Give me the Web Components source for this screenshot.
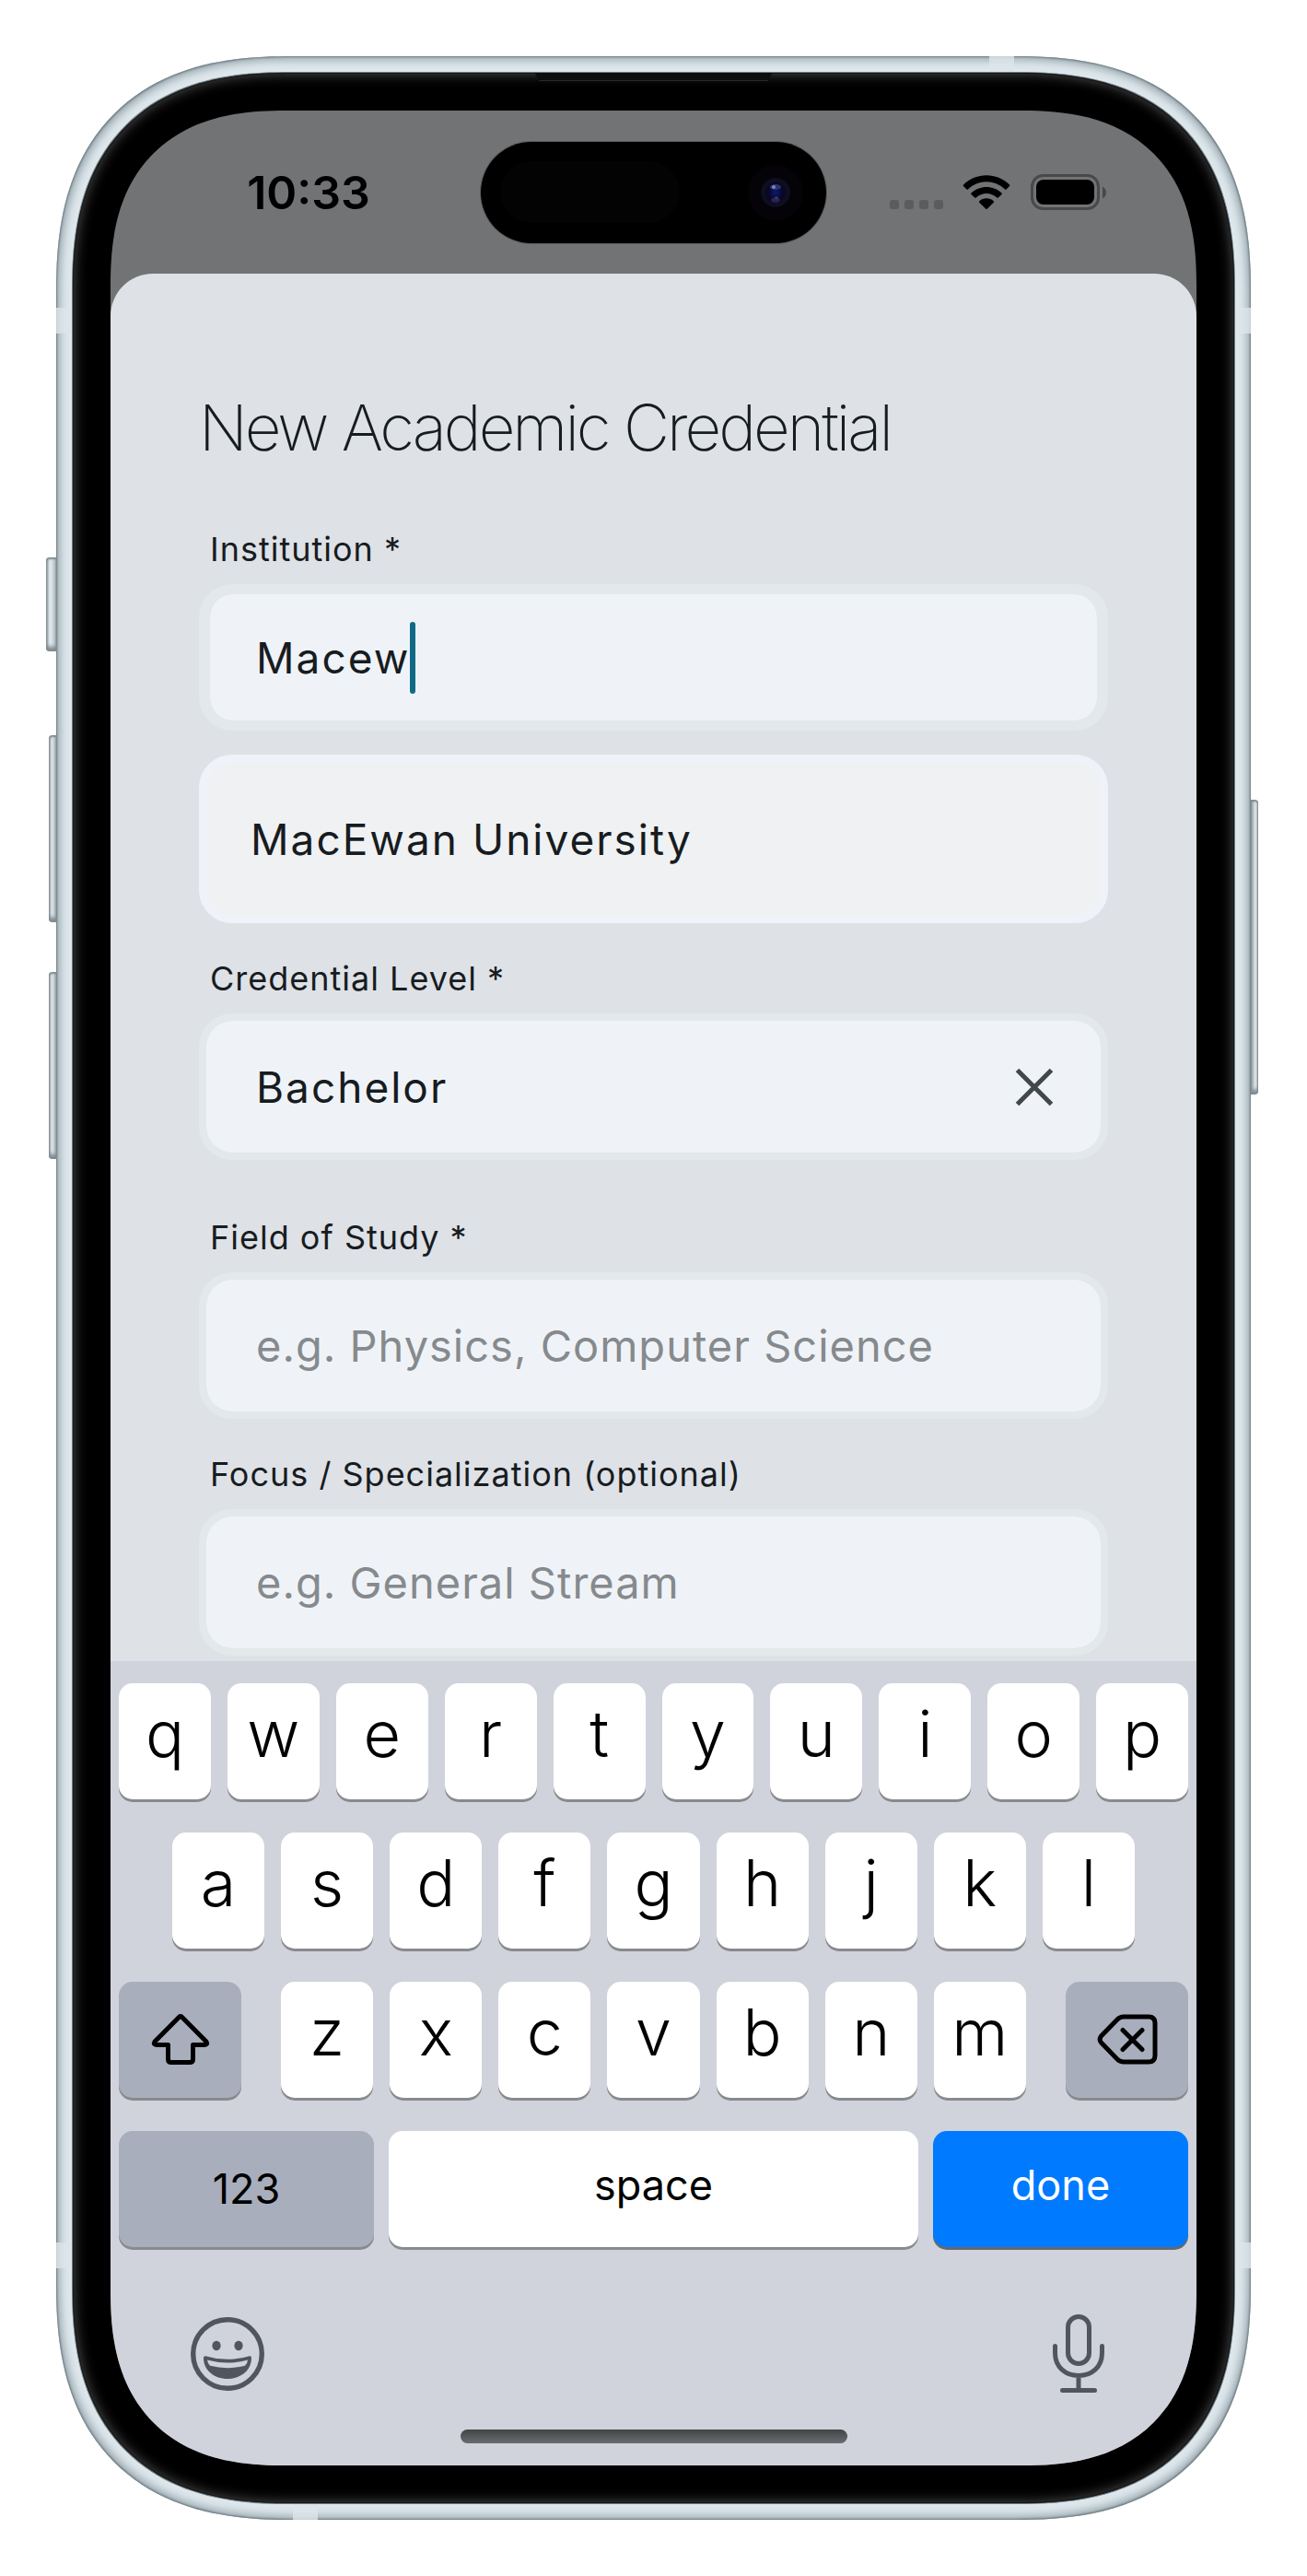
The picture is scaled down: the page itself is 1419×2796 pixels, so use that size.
<!DOCTYPE html>
<html lang="en">
<head>
<meta charset="utf-8">
<meta name="viewport" content="width=device-width, initial-scale=1">
<title>New Academic Credential</title>
<style>
  body { margin: 0; background: #fff; font-family: Inter, "Liberation Sans", sans-serif; color: #171c1f; }
</style>
</head>
<body>
<phone-frame>
  <status-bar></status-bar>
  <form-sheet heading="New Academic Credential">
    <text-field label="Institution *" value="Macew" focused></text-field>
    <suggestion-card>MacEwan University</suggestion-card>
    <text-field label="Credential Level *" value="Bachelor" clearable></text-field>
    <text-field label="Field of Study *" placeholder="e.g. Physics, Computer Science"></text-field>
    <text-field label="Focus / Specialization (optional)" placeholder="e.g. General Stream"></text-field>
  </form-sheet>
  <key-board></key-board>
</phone-frame>

<script>
function define(name, render) {
  customElements.define(name, class extends HTMLElement {
    connectedCallback() {
      if (this.shadowRoot) return;
      this.attachShadow({ mode: 'open' }).innerHTML = render(this);
    }
  });
}

define('phone-frame', () => `
<style>
  :host { display: block; position: relative; margin: 61px; }
  .rim, .bezel, .screen { box-sizing: border-box; corner-shape: superellipse(1.3); }
  .rim { position: relative; padding: 18px; border-radius: 222px; background: #dde7ec;
         box-shadow: inset 0 0 2px 1px #6f7c82, inset 0 0 10px 4px #98a6ad; }
  .bezel { position: relative; padding: 41px; border-radius: 204px; background: #000;
           box-shadow: inset 0 0 0 1px #16191a, inset 0 0 14px 1px #505050, 0 0 0 1px #6f7b81; }
  .screen { display: flex; flex-direction: column; overflow: hidden; border-radius: 163px; background: #727375; }
  @supports (corner-shape: superellipse(1.3)) {
    .rim { border-radius: 256px; }
    .bezel { border-radius: 236px; }
    .screen { border-radius: 190px; }
  }
  .side { position: absolute; width: 11px; border-radius: 4px 0 0 4px;
          background: linear-gradient(90deg, #8b969b, #e4ecf0 35%, #bcc8ce);
          box-shadow: inset 0 2px 2px #7f8a90, inset 0 -5px 4px #7f8a90; }
  .slim { width: 8px; }
  .right { border-radius: 0 4px 4px 0; background: linear-gradient(90deg, #8f9ba1, #c9d4da 40%, #f0f4f6 75%, #7b868c); }
  .band { position: absolute; background: #dce5e8; opacity: .8; }
  .ear { position: absolute; top: 0; left: 50%; width: 258px; margin-left: -129px; height: 9px; background: #0d0d0d;
         border-bottom: 1px solid #2a2a2a; box-sizing: border-box; clip-path: polygon(0 0, 100% 0, 98% 100%, 2% 100%); }
</style>
<div class="side" style="left:-11px;top:544px;height:102px"></div>
<div class="side slim" style="left:-8px;top:737px;height:203px"></div>
<div class="side slim" style="left:-8px;top:994px;height:203px"></div>
<div class="side slim right" style="right:-8px;top:807px;height:320px"></div>
<div class="rim">
  <div class="band" style="left:0;top:273px;width:17px;height:28px"></div>
  <div class="band" style="right:0;top:273px;width:17px;height:28px"></div>
  <div class="band" style="left:0;bottom:273px;width:17px;height:28px"></div>
  <div class="band" style="right:0;bottom:273px;width:17px;height:28px"></div>
  <div class="band" style="right:257px;top:0;width:27px;height:17px"></div>
  <div class="band" style="left:257px;bottom:0;width:27px;height:17px"></div>
  <div class="bezel"><div class="ear"></div><div class="screen"><slot></slot></div></div>
</div>`);

define('status-bar', () => `
<style>
  :host { display: grid; grid-template-columns: 1fr 375px 1fr; align-items: center; height: 177px; color: #000; }
  time { text-align: center; padding-left: 28px; font-size: 50px; font-weight: 600; line-height: 60px; }
  .island { height: 110px; border-radius: 55px; background: #000; box-shadow: 0 0 0 1px #5c5d5f; box-sizing: border-box;
            display: flex; align-items: center; justify-content: space-between; padding: 0 25px 0 21px; }
  .sensor { width: 195px; height: 67px; border-radius: 34px; background: #030303; }
  .icons { display: flex; justify-content: center; align-items: center; padding-right: 29px; }
  svg { display: block; }
</style>
<time>10:33</time>
<div class="island"><div class="sensor"></div>
  <svg width="60" height="60" viewBox="0 0 60 60"><defs>
    <radialGradient id="lens"><stop offset="0" stop-color="#131b66"/><stop offset=".45" stop-color="#090b42"/><stop offset=".75" stop-color="#07071f"/><stop offset="1" stop-color="#0c0d1e"/></radialGradient></defs>
    <circle cx="30" cy="30" r="30" fill="#050307"/><circle cx="30" cy="30" r="16" fill="#0d0e20"/>
    <circle cx="30" cy="30" r="12" fill="url(#lens)"/><ellipse cx="30" cy="24" rx="6" ry="3" fill="#2b3378"/>
    <circle cx="28" cy="24" r="2" fill="#7c83bd"/><ellipse cx="30" cy="38" rx="5" ry="3" fill="#35195a"/><circle cx="31" cy="36" r="2" fill="#12494f"/></svg>
</div>
<div class="icons">
  <svg width="236" height="40" viewBox="0 0 236 40" role="img" aria-label="Wi-Fi connected, battery full">
    <g fill="#5b5c5e"><rect x="0" y="28" width="10" height="10" rx="3"/><rect x="16" y="28" width="10" height="10" rx="3"/><rect x="32" y="28" width="10" height="10" rx="3"/><rect x="48" y="28" width="10" height="10" rx="3"/></g>
    <g fill="#000"><path d="M80 11.5C94 -2.2 116 -2.2 130 11.5Q130.700 12.300 130 13L126.500 16.400Q125.800 17 125 16.400C113.500 5.600 96.500 5.600 85 16.400Q84.200 17 83.500 16.400L80 13Q79.300 12.300 80 11.500Z"/>
    <path d="M88.500 20.500C97.500 11.700 112.500 11.700 121.500 20.500Q122.200 21.200 121.500 22L117.800 25.500Q117 26 116.300 25.500C109.800 19.500 100.200 19.500 93.700 25.500Q93 26 92.200 25.500L88.500 22Q87.800 21.200 88.500 20.500Z"/>
    <path d="M97.300 29.200C101.600 25.400 108.400 25.400 112.700 29.200Q113.500 30 112.800 30.800L106 37.500Q105 38.300 104 37.500L97.200 30.800Q96.500 30 97.300 29.200Z"/></g>
    <rect x="154.500" y="1.500" width="72" height="36" rx="12" fill="none" stroke="#48494b" stroke-width="3"/>
    <rect x="159" y="6" width="63" height="27" rx="8" fill="#000"/><path d="M231 13.500Q235 16 235 20T231 26.500Z" fill="#48494b"/>
  </svg>
</div>`);

define('form-sheet', el => `
<style>
  :host { display: flex; flex-direction: column; gap: 38px; padding: 125px 96px 6px; border-radius: 46px 46px 0 0; background: #dee1e6; }
  h1 { margin: 0 0 30px; font-size: 69px; line-height: 84px; font-weight: 200; letter-spacing: -3px; white-space: nowrap; }
</style>
<h1>${el.getAttribute('heading')}</h1>
<slot></slot>`);

define('text-field', el => {
  const a = n => el.getAttribute(n) || '';
  const on = el.hasAttribute('focused'), clear = el.hasAttribute('clearable');
  return `
<style>
  :host { display: flex; flex-direction: column; gap: 16px; }
  :host([clearable]) { padding-bottom: 24px; }
  label { padding-left: 12px; font-size: 36px; line-height: 44px; letter-spacing: 1px; }
  .box { display: flex; align-items: center; box-sizing: border-box; height: 159px; padding: 0 48px 0 54px; border: 8px solid #e3e8eb;
         border-radius: 36px; background: #eff3f8; background-clip: padding-box; }
  :host([focused]) .box { border-width: 11px 12px; padding-left: 50px; }
  input { flex: 1; min-width: 0; padding: 0; border: 0; outline: 0; background: none; font: inherit; font-size: 46px; line-height: 60px; height: 60px;
          letter-spacing: 2px; color: #171c1f; }
  :host([focused]) input { flex: none; field-sizing: content; caret-color: transparent; }
  :host([placeholder]) input { font-size: 47px; letter-spacing: 1px; }
  input::placeholder { color: #868a8d; opacity: 1; }
  .caret { width: 6px; height: 78px; border-radius: 3px; background: #106a84; }
  button { width: 48px; height: 48px; padding: 0; border: 0; background: none; color: #41484c; }
  svg { display: block; }
</style>
<label for="in">${a('label')}</label>
<div class="box"><input id="in" type="text" value="${a('value')}" placeholder="${a('placeholder')}">${on ? '<span class="caret"></span>' : ''}${clear ? `
  <button type="button" aria-label="Clear"><svg width="48" height="48" viewBox="0 0 48 48" fill="none" stroke="currentColor" stroke-width="5"><path d="M5.500 5.500L42.500 42.500M42.500 5.500L5.500 42.500"/></svg></button>` : ''}</div>`;
});

define('suggestion-card', () => `
<style>
  :host { display: block; margin-top: -12px; }
  button { display: block; width: 100%; height: 183px; box-sizing: border-box; padding: 0 48px; border: 8px solid #eff3f9; border-radius: 36px;
           background: #f0f1f3; color: #171c1f; font: inherit; font-size: 46px; line-height: 60px; letter-spacing: 2px; text-align: left; }
</style>
<button type="button"><slot></slot></button>`);

define('key-cap', () => `
<style>
  :host { display: flex; flex: 1 1 0; min-width: 0; height: 126px; }
  button { flex: 1; min-width: 0; display: flex; align-items: center; justify-content: center; padding: 0 0 16px; border: 0; border-radius: 15px; background: #fff;
           box-shadow: 0 3px 0 #898a8e; color: #000; font: inherit; font-size: 70px; font-weight: 350; line-height: 84px; }
  :host([kind~="word"]) button { font-size: 45px; font-weight: 400; padding-bottom: 8px; }
  :host([kind~="dark"]) button { background: #a8aebc; padding-bottom: 0; }
  :host([kind~="blue"]) button { background: #007aff; color: #fff; box-shadow: 0 3px 0 #65686f; }
</style>
<button type="button"><slot></slot></button>`);

const caps = s => [...s].map(c => `<key-cap>${c}</key-cap>`).join('');
define('key-board', () => `
<style>
  :host { display: flex; flex-direction: column; gap: 36px; padding: 24px 9px; background: #d0d3dc; }
  .row { display: flex; gap: 18px; }
  .mid { padding: 0 5%; }
  .low { gap: 43px; }
  .low key-cap { flex-grow: 133; }
  .low .row { flex: 809 1 0; }
  .low .row key-cap { flex-grow: 1; }
  .base { gap: 16px; }
  .side { flex-grow: 277; }
  .space { flex-grow: 575; }
  .tools { display: flex; justify-content: space-between; padding: 32px 71px 0 70px; }
  .tools button { width: 96px; height: 96px; padding: 0; border: 0; background: none; color: #51555e; display: flex; align-items: center; justify-content: center; }
  .home { width: 420px; height: 15px; margin: -2px auto 0; border-radius: 8px; background: linear-gradient(#434446, #6b6c70); }
  svg { display: block; fill: none; stroke: currentColor; }
</style>
<div class="row">${caps('qwertyuiop')}</div>
<div class="row mid">${caps('asdfghjkl')}</div>
<div class="row low">
  <key-cap kind="dark"><svg role="img" aria-label="Shift" width="64" height="56" viewBox="0 0 64 56" stroke-width="5" stroke-linejoin="round" style="color:#000"><path d="M29.800 4Q32 1.200 34.200 4L60 30Q62 33.500 58 33.500H45.500V49Q45.500 52.500 42 52.500H22Q18.500 52.500 18.500 49V33.500H6Q2 33.500 4 30Z"/></svg></key-cap>
  <div class="row">${caps('zxcvbnm')}</div>
  <key-cap kind="dark"><svg role="img" aria-label="Delete" width="66" height="56" viewBox="0 0 66 56" stroke-width="5" stroke-linejoin="round" stroke-linecap="round" style="color:#000"><path d="M29 3H56Q63 3 63 10V45Q63 52 56 52H29Q25 52 22 49L4.500 31Q1.800 27.500 4.500 24L22 6Q25 3 29 3ZM28 17.500L49 38.500M49 17.500L28 38.500"/></svg></key-cap>
</div>
<div class="row base"><key-cap class="side" kind="word dark">123</key-cap><key-cap class="space" kind="word">space</key-cap><key-cap class="side" kind="word blue">done</key-cap></div>
<div class="tools">
  <button type="button" aria-label="Emoji"><svg width="80" height="80" viewBox="0 0 80 80"><circle cx="40" cy="40" r="37.300" stroke-width="5.400"/><g fill="currentColor" stroke="none"><ellipse cx="28" cy="31" rx="4.600" ry="5.200"/><ellipse cx="52" cy="31" rx="4.600" ry="5.200"/><path fill-rule="evenodd" d="M16 42.200Q40 49.500 64 42.200Q66 42 66 44.500C66 58 54 67 40 67S14 58 14 44.500Q14 42 16 42.200ZM18 46.500Q18.500 50.500 21 52.800Q40 57.500 59 52.800Q61.500 50.500 62 46.500Q40 52.500 18 46.500Z"/></g></svg></button>
  <button type="button" aria-label="Dictate"><svg width="56" height="86" viewBox="0 0 56 86" stroke-width="5" stroke-linecap="round"><rect x="16.500" y="2.500" width="23" height="51" rx="11.500"/><path d="M2.500 34.500V42C2.500 57 13.500 66.500 28 66.500S53.500 57 53.500 42V34.500M28 67V82.500M10.500 82.500H45.500"/></svg></button>
</div>
<div class="home"></div>`);
</script>
</body>
</html>
